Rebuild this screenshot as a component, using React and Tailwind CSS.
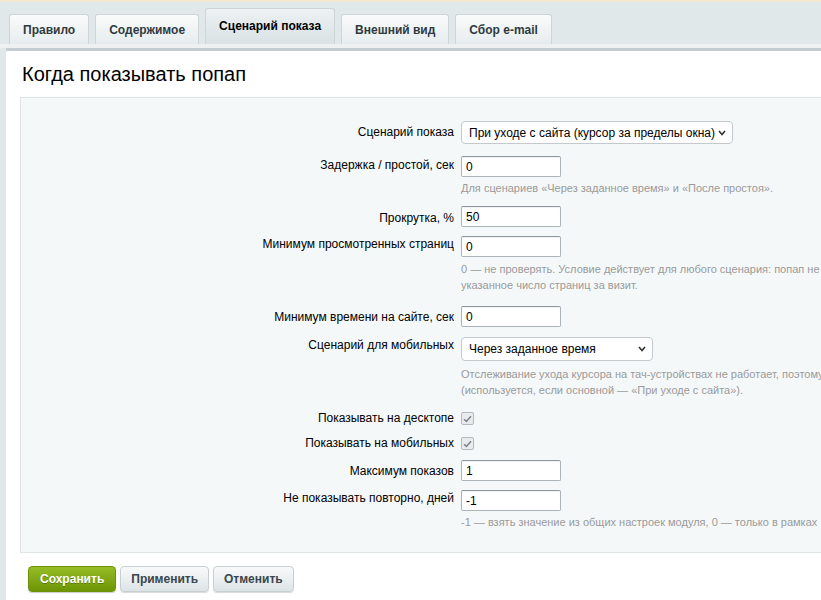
import { useState } from 'react';

const tabs = ['Правило', 'Содержимое', 'Сценарий показа', 'Внешний вид', 'Сбор e-mail'];

function Chevron() {
  return (
    <svg width="8" height="6" viewBox="0 0 8 6" className="shrink-0">
      <polyline points="1,1 4,4.5 7,1" fill="none" stroke="#333" strokeWidth="1.6" />
    </svg>
  );
}

function Select({ value, width }) {
  return (
    <div
      className={`flex items-center justify-between pl-[7px] pr-[6px] bg-white border border-[#c3c9cc] rounded-[4px] text-[12px] text-black ${width}`}
    >
      <span className="whitespace-nowrap">{value}</span>
      <Chevron />
    </div>
  );
}

function TextInput({ value }) {
  return (
    <div className="w-[100px] h-[21px] flex items-center pl-[4px] bg-white border border-[#a9b3b8] border-t-[#8d989e] rounded-[2px] shadow-[inset_0_1px_1px_rgba(0,0,0,0.06)] text-[12px] text-black">
      {value}
    </div>
  );
}

function Check() {
  return (
    <span className="w-[13px] h-[13px] flex items-center justify-center bg-[#e9ecee] border border-[#b3b9bc] rounded-[2px]">
      <svg width="9" height="8" viewBox="0 0 9 8">
        <polyline points="1,4.2 3.4,6.4 8,1.2" fill="none" stroke="#7d8387" strokeWidth="1.5" />
      </svg>
    </span>
  );
}

function Hint({ lines, mt = 'mt-[3px]' }) {
  return (
    <div className={`${mt} text-[11px] leading-[16px] text-[#9a9a9a] whitespace-nowrap`}>
      {lines.map((l) => (
        <div key={l}>{l}</div>
      ))}
    </div>
  );
}

/** One label / field row of the settings form */
function Row({ label, labelPt, mt, children }) {
  return (
    <div className={`flex items-start ${mt}`}>
      <div className={`w-[433px] shrink-0 text-right text-[12px] leading-[16px] text-black whitespace-nowrap ${labelPt}`}>
        {label}
      </div>
      <div className="ml-[7px]">{children}</div>
    </div>
  );
}

export default function App() {
  const [active, setActive] = useState(2);

  return (
    <div className="w-[821px] h-[600px] overflow-hidden bg-[#e1e8ea] font-['Liberation_Sans',Arial,sans-serif]">
      <div className="h-[2px] bg-[#f1e7d4]" />

      {/* Tabs */}
      <div className="h-[42px] flex items-end gap-[6px] pl-[9px]">
        {tabs.map((t, i) => (
          <button
            key={t}
            onClick={() => setActive(i)}
            className={`px-[13px] border border-b-0 border-[#cdd5d8] rounded-t-[3px] text-[12px] font-bold text-[#2f3a3f] ${
              active === i
                ? 'h-[36px] pb-[2px] bg-gradient-to-b from-[#edf1f2] to-[#d9e2e5] text-black'
                : 'h-[30px] bg-gradient-to-b from-[#fafbfb] to-[#e6ecee]'
            }`}
          >
            {t}
          </button>
        ))}
      </div>
      <div className="h-[4px] bg-[#edf1f2]" />

      {/* Panel */}
      <div className="ml-[6px] h-[560px] bg-white border-t-[3px] border-[#c4cdd1]">
        <h2 className="pl-[16px] pt-[11px] text-[20px] leading-[24px] text-black">Когда показывать попап</h2>

        <div className="ml-[14px] mt-[11px] pt-[23px] pb-[22px] bg-[#f5f8f9] border border-r-0 border-[#dfe5e7]">
          <Row label="Сценарий показа" labelPt="pt-[3px]" mt="">
            <Select value="При уходе с сайта (курсор за пределы окна)" width="w-[272px] h-[23px]" />
          </Row>

          <Row label="Задержка / простой, сек" labelPt="pt-[1px]" mt="mt-[12px]">
            <TextInput value="0" />
            <Hint lines={['Для сценариев «Через заданное время» и «После простоя».']} />
          </Row>

          <Row label="Прокрутка, %" labelPt="pt-[4px]" mt="mt-[10px]">
            <TextInput value="50" />
          </Row>

          <Row label="Минимум просмотренных страниц" labelPt="pt-[0px]" mt="mt-[9px]">
            <TextInput value="0" />
            <Hint
              mt="mt-[4px]"
              lines={[
                '0 — не проверять. Условие действует для любого сценария: попап не',
                'указанное число страниц за визит.',
              ]}
            />
          </Row>

          <Row label="Минимум времени на сайте, сек" labelPt="pt-[3px]" mt="mt-[13px]">
            <TextInput value="0" />
          </Row>

          <Row label="Сценарий для мобильных" labelPt="pt-[0px]" mt="mt-[10px]">
            <Select value="Через заданное время" width="w-[192px] h-[24px]" />
            <Hint
              mt="mt-[5px]"
              lines={[
                'Отслеживание ухода курсора на тач-устройствах не работает, поэтому',
                '(используется, если основной — «При уходе с сайта»).',
              ]}
            />
          </Row>

          <Row label="Показывать на десктопе" labelPt="pt-[0px]" mt="mt-[12px]">
            <div className="pt-[2px]">
              <Check />
            </div>
          </Row>

          <Row label="Показывать на мобильных" labelPt="pt-[0px]" mt="mt-[9px]">
            <div className="pt-[2px]">
              <Check />
            </div>
          </Row>

          <Row label="Максимум показов" labelPt="pt-[3px]" mt="mt-[9px]">
            <TextInput value="1" />
          </Row>

          <Row label="Не показывать повторно, дней" labelPt="pt-[0px]" mt="mt-[9px]">
            <TextInput value="-1" />
            <Hint mt="mt-[3px]" lines={['-1 — взять значение из общих настроек модуля, 0 — только в рамках']} />
          </Row>
        </div>

        {/* Footer buttons */}
        <div className="flex gap-[4px] pl-[22px] mt-[13px]">
          <button className="h-[26px] px-[11px] rounded-[4px] border border-[#6e9108] bg-gradient-to-b from-[#97bd24] to-[#6c9503] text-[12px] font-bold text-white [text-shadow:0_1px_0_rgba(0,0,0,0.25)] shadow-[0_1px_1px_rgba(0,0,0,0.2)]">
            Сохранить
          </button>
          <button className="h-[26px] px-[10px] rounded-[4px] border border-[#c7cfd2] bg-gradient-to-b from-[#f8fafa] to-[#dde4e7] text-[12px] font-bold text-[#3a454c] shadow-[0_1px_1px_rgba(0,0,0,0.15)]">
            Применить
          </button>
          <button className="h-[26px] px-[10px] rounded-[4px] border border-[#c7cfd2] bg-gradient-to-b from-[#f8fafa] to-[#dde4e7] text-[12px] font-bold text-[#3a454c] shadow-[0_1px_1px_rgba(0,0,0,0.15)]">
            Отменить
          </button>
        </div>
      </div>
    </div>
  );
}
